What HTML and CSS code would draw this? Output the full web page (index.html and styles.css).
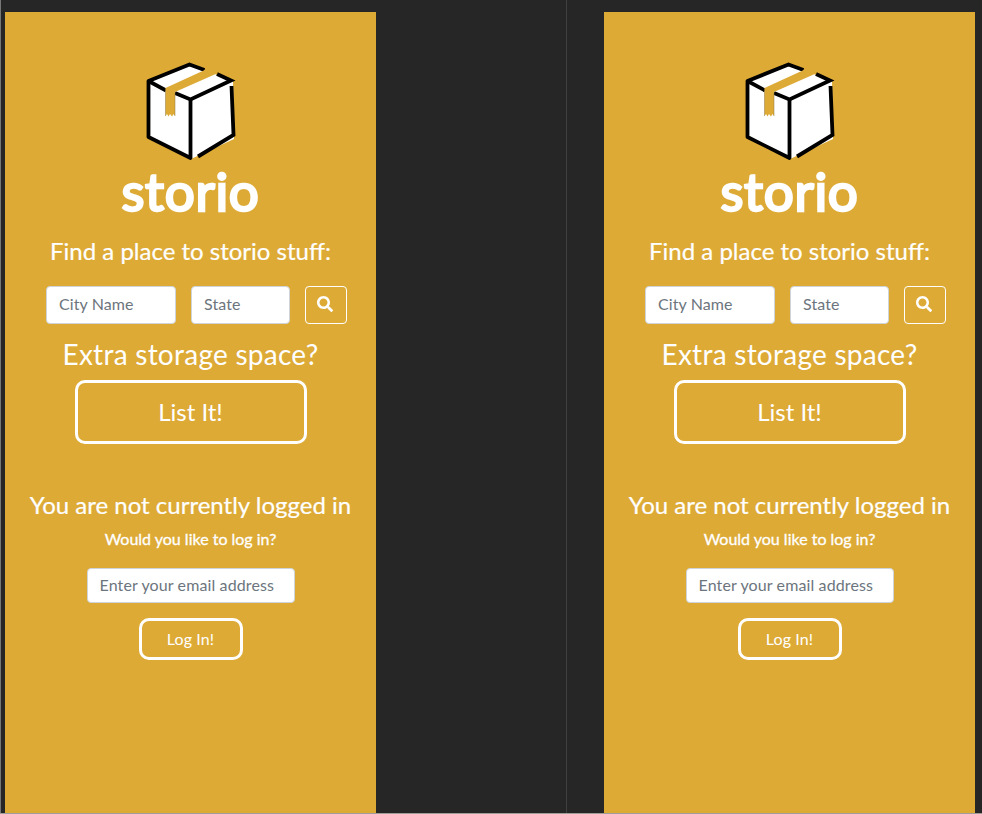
FILE: index.html
```
<!DOCTYPE html>
<html lang="en">
<head>
<meta charset="utf-8">
<title>storio</title>
<link rel="stylesheet" href="styles.css">
</head>
<body>
<svg class="sprites" aria-hidden="true">
  <symbol id="box" viewBox="0 0 90 98">
    <path d="M2 18 43 2 87 19 88 77 45 97 2 75Z" fill="#fff"/>
    <path d="M58.500 8 43.500 2.500 2.500 19V75L44.500 96V37" fill="none" stroke="#000" stroke-width="3.800" stroke-linejoin="round"/>
    <path d="M2.500 19 20 28.500M29 31 44.500 37.500 85 18.500 71 12M85.500 24 87.500 73 52 94.500" fill="none" stroke="#000" stroke-width="3.800"/>
    <path d="M19.500 54V26L62 6.500 72 11 29 30V54L27.500 52 26 54.500 24 52 22.500 54.500 21 52Z" fill="#ddaa36"/>
    <path d="M19.500 54V27M29 54V31" stroke="#8f7a42" stroke-width=".5"/>
  </symbol>
  <symbol id="search" viewBox="0 0 512 512">
    <path fill="#fff" d="M505 442.700 405.300 343c-4.500-4.500-10.600-7-17-7H372c27.600-35.300 44-79.700 44-128C416 93.100 322.900 0 208 0S0 93.100 0 208s93.100 208 208 208c48.300 0 92.700-16.400 128-44v16.300c0 6.400 2.500 12.500 7 17l99.700 99.700c9.400 9.400 24.600 9.400 33.900 0l28.300-28.300c9.400-9.400 9.400-24.600.1-34zM208 336c-70.700 0-128-57.200-128-128 0-70.700 57.200-128 128-128 70.700 0 128 57.200 128 128 0 70.700-57.200 128-128 128z"/>
  </symbol>
</svg>
<main class="board">
  <section class="pane">
    <div class="screen">
      <svg class="box"><use href="#box"/></svg>
      <h1 class="brand">storio</h1>
      <h2 class="find">Find a place to storio stuff:</h2>
      <form class="search">
        <input class="field city" placeholder="City Name">
        <input class="field state" placeholder="State">
        <button class="go" type="button" aria-label="Search"><svg><use href="#search"/></svg></button>
      </form>
      <h2 class="extra">Extra storage space?</h2>
      <button class="outline list" type="button">List It!</button>
      <h2 class="status">You are not currently logged in</h2>
      <p class="ask">Would you like to log in?</p>
      <input class="field email" placeholder="Enter your email address">
      <button class="outline login" type="button">Log In!</button>
    </div>
  </section>
  <section class="pane second">
    <div class="screen">
      <svg class="box"><use href="#box"/></svg>
      <h1 class="brand">storio</h1>
      <h2 class="find">Find a place to storio stuff:</h2>
      <form class="search">
        <input class="field city" placeholder="City Name">
        <input class="field state" placeholder="State">
        <button class="go" type="button" aria-label="Search"><svg><use href="#search"/></svg></button>
      </form>
      <h2 class="extra">Extra storage space?</h2>
      <button class="outline list" type="button">List It!</button>
      <h2 class="status">You are not currently logged in</h2>
      <p class="ask">Would you like to log in?</p>
      <input class="field email" placeholder="Enter your email address">
      <button class="outline login" type="button">Log In!</button>
    </div>
  </section>
</main>
</body>
</html>
```
FILE: styles.css
```
* { box-sizing: border-box; margin: 0; padding: 0; }
body { background: #262626; overflow: hidden; }
.sprites { display: none; }
input, button, h1, h2, p { font-family: Lato, "Open Sans", sans-serif; font-weight: 400; color: #fff; white-space: nowrap; }

.board { display: flex; height: 814px; border-bottom: 1px solid #a09c98; }
.pane { width: 567px; padding: 12px 0 0 4px; border-left: 1px solid #777; border-right: 1px solid #404040; }
.second { width: 415px; padding-left: 37px; border: 0; }
.screen { width: 371px; height: 801px; background: #ddaa36; display: flex; flex-direction: column; align-items: center; }

.box { width: 90px; height: 98px; margin-top: 50px; flex: none; }
.brand { font-size: 53px; line-height: 62px; height: 66px; letter-spacing: 0.700px; -webkit-text-stroke: 2.500px #fff; stroke-linejoin: round; }
.find, .status { font-size: 24px; line-height: 30px; }
.find { margin-top: 10px; -webkit-text-stroke: .2px #fff; }
.search { display: flex; margin: 20px 0 0 12px; gap: 15px; }
.field { height: 38px; padding: 0 12px 3px; border: 1px solid #ced4da; border-radius: 4px; background: #fff; font-size: 16px; outline: 0; }
.field::placeholder { color: #6c757d; opacity: 1; }
.city { width: 130px; letter-spacing: .1px; }
.state { width: 99px; letter-spacing: .1px; }
.go { width: 42px; height: 38px; padding: 0 2px 2px 0; background: none; border: 1px solid #fff; border-radius: 4px; display: flex; align-items: center; justify-content: center; }
.go svg { width: 16px; height: 16px; }
.extra { font-size: 28px; line-height: 34px; margin-top: 13px; letter-spacing: .260px; }
.outline { border: 3px solid #fff; border-radius: 10px; background: none; flex: none; padding-bottom: 2px; }
.list { width: 232px; height: 64px; margin-top: 9px; font-size: 24px; }
.status { margin-top: 46px; -webkit-text-stroke: .2px #fff; }
.ask { font-size: 16px; line-height: 20px; margin-top: 9px; -webkit-text-stroke: .3px #fff; }
.email { width: 208px; height: 35px; margin-top: 19px; letter-spacing: .120px; }
.login { width: 104px; height: 42px; margin-top: 15px; font-size: 16px; letter-spacing: .1px; }
```
